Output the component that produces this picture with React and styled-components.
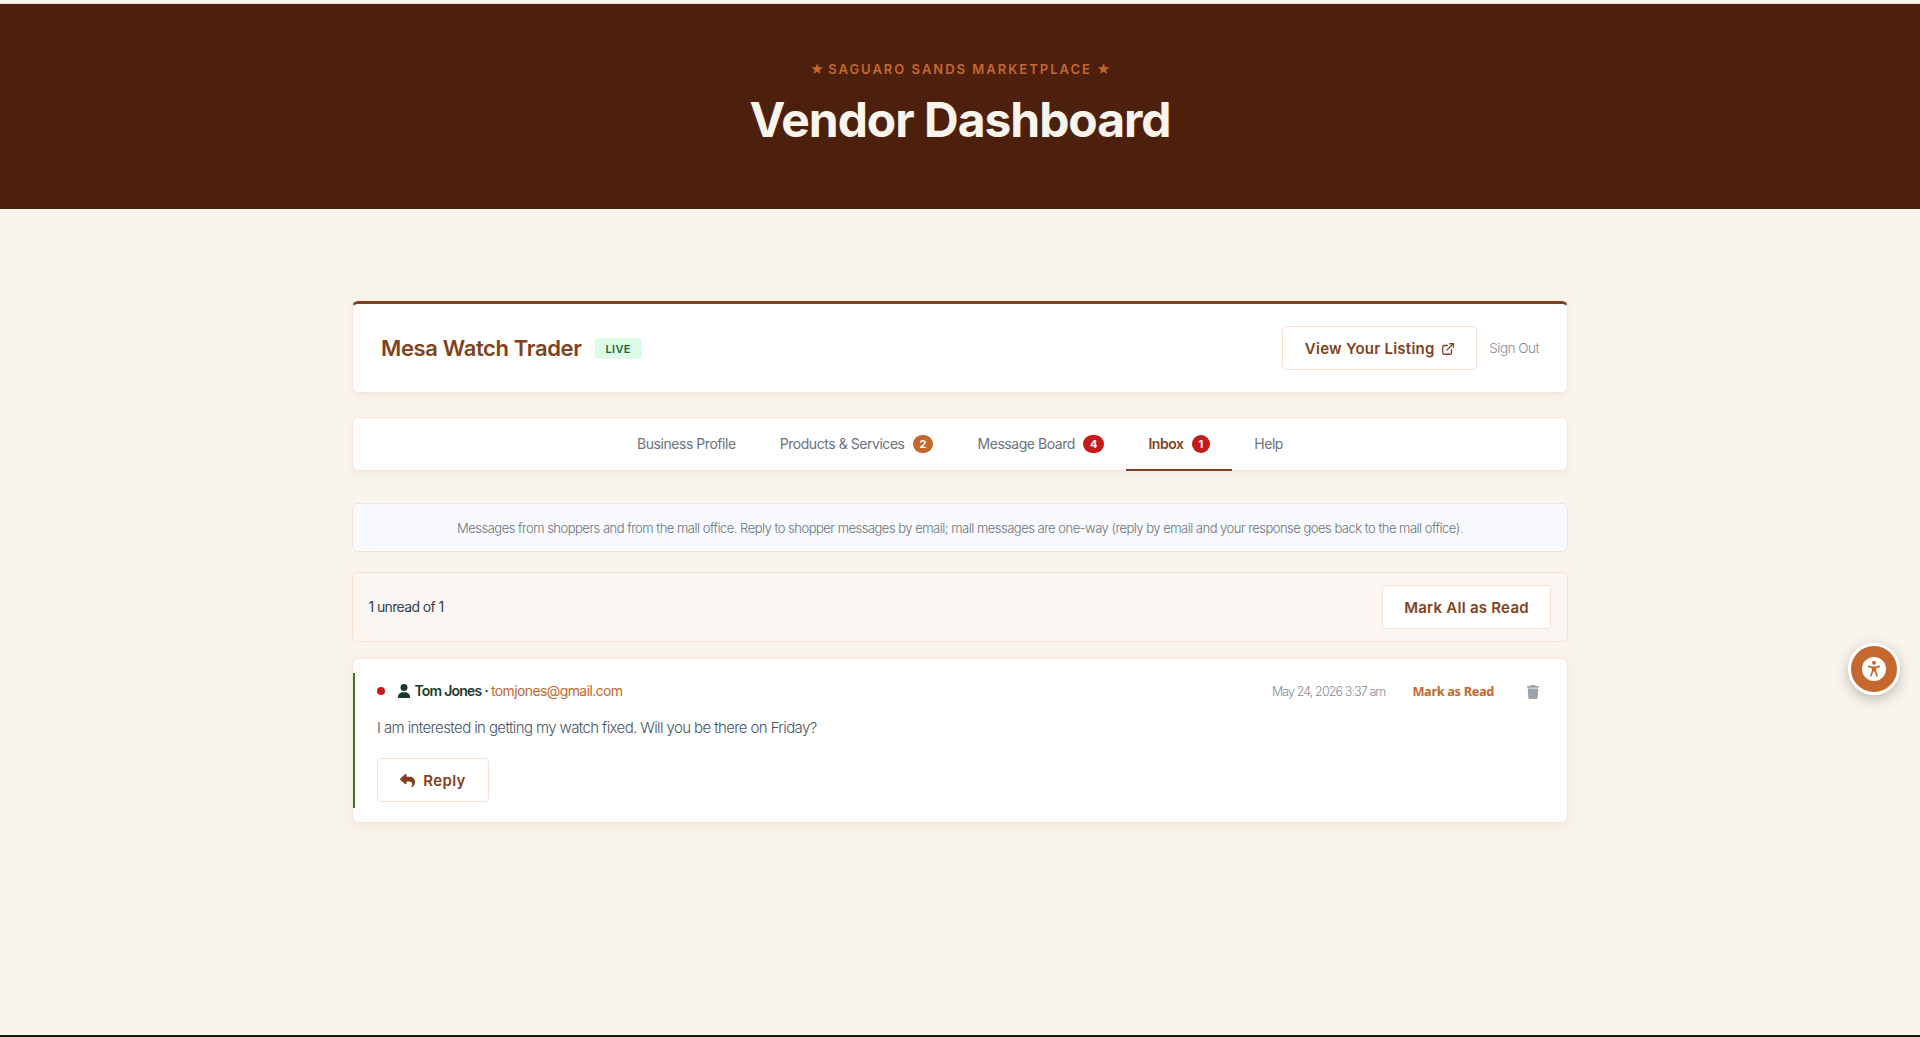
import React from "react";
import styled, { createGlobalStyle } from "styled-components";
import { ExternalLink } from "lucide-react";
import { FaUser, FaReply, FaTrash } from "react-icons/fa6";

const GlobalStyle = createGlobalStyle`
  *, *::before, *::after { box-sizing: border-box; }
  html, body { margin: 0; height: 100%; overflow: hidden; }
  body {
    background: #faf5ec;
    color: #475569;
    font-family: Inter, "Liberation Sans", sans-serif;
  }
  button { font-family: inherit; cursor: pointer; }
  a { text-decoration: none; }
`;

const Page = styled.div`
  height: 1037px;
  display: flex;
  flex-direction: column;
  overflow: hidden;
`;

const TopStrip = styled.div`
  flex: none;
  height: 4px;
  background: #faf5ec;
  border-bottom: 1px solid #eadfd5;
`;

const Hero = styled.header`
  flex: none;
  height: 205px;
  padding-top: 56px;
  display: flex;
  flex-direction: column;
  align-items: center;
  background: #4d200d;
`;

const Eyebrow = styled.div`
  display: flex;
  align-items: center;
  gap: 5px;
  color: #c4682e;
  font-size: 13px;
  font-weight: 600;
  line-height: 19px;
  letter-spacing: 1.99px;
`;

const Star = styled.span`
  width: 13px;
  font-family: "DejaVu Sans", sans-serif;
  font-size: 15px;
  font-weight: 400;
  letter-spacing: 0;
`;

const HeroTitle = styled.h1`
  margin: 12px 0 0;
  color: #faf5ec;
  font-size: 48px;
  font-weight: 700;
  line-height: 58px;
  letter-spacing: -1.05px;
`;

const Main = styled.main`
  flex: 1;
  width: 1216px;
  margin: 0 auto;
  padding-top: 92px;
`;

const Card = styled.section`
  background: #fff;
  border: 1px solid #f7e4d9;
  border-radius: 6px;
  box-shadow: 0 3px 10px rgba(77, 32, 13, 0.05);
`;

const VendorCard = styled(Card)`
  height: 92px;
  padding: 0 28px;
  display: flex;
  align-items: center;
  border-top: 3px solid #80421c;
`;

const VendorName = styled.h2`
  margin: 0;
  color: #80421c;
  font-size: 22px;
  font-weight: 600;
  line-height: 28px;
  letter-spacing: -0.36px;
`;

const StatusPill = styled.span`
  display: grid;
  place-items: center;
  width: 47px;
  height: 21px;
  margin: 1px 0 0 13px;
  border-radius: 4px;
  background: #dcfce7;
  color: #1c6637;
  font-size: 11px;
  font-weight: 600;
  letter-spacing: 0.3px;
`;

const VendorActions = styled.div`
  display: flex;
  align-items: center;
  gap: 12px;
  margin-left: auto;
`;

const OutlineButton = styled.button`
  display: flex;
  align-items: center;
  justify-content: center;
  gap: ${(p) => p.$gap || 6}px;
  width: ${(p) => p.$width}px;
  height: 44px;
  padding: 1px 0 0;
  border: 1px solid #f7e1d4;
  border-radius: 4px;
  background: #fff;
  color: #80421c;
  font-size: 15px;
  font-weight: 600;
  letter-spacing: ${(p) => p.$tracking || 0.25}px;
  white-space: nowrap;
`;

const SignOut = styled.a`
  color: #858b99;
  font-size: 13.5px;
  font-weight: 300;
  letter-spacing: -0.5px;
`;

const Tabs = styled(Card).attrs({ as: "nav" })`
  display: flex;
  justify-content: center;
  height: 54px;
  margin-top: 24px;
`;

const Tab = styled.a`
  display: flex;
  align-items: center;
  gap: 8px;
  height: 53px;
  padding: 0 22px;
  border-bottom: 2px solid ${(p) => (p.$active ? "#80421c" : "transparent")};
  color: ${(p) => (p.$active ? "#80421c" : "#6b7280")};
  font-size: 14px;
  font-weight: ${(p) => (p.$active ? 600 : 400)};
  letter-spacing: -0.45px;
`;

const CountBadge = styled.span`
  display: grid;
  place-items: center;
  height: 18px;
  padding: 0 7px;
  border-radius: 9px;
  background: ${(p) => (p.$urgent ? "#c41a1a" : "#c4682e")};
  color: #fff;
  font-size: 11px;
  font-weight: 700;
  letter-spacing: 0;
`;

const InfoBanner = styled.p`
  display: flex;
  align-items: center;
  justify-content: center;
  height: 49px;
  margin: 32px 0 0;
  border: 1px solid #f2e2dc;
  border-radius: 6px;
  background: #f9fafe;
  color: #6b7280;
  font-size: 13px;
  font-weight: 300;
  letter-spacing: -0.505px;
  white-space: nowrap;
`;

const InboxToolbar = styled.div`
  display: flex;
  align-items: center;
  justify-content: space-between;
  height: 70px;
  margin-top: 20px;
  padding: 0 16px 0 15.5px;
  border: 1px solid #f5dfd0;
  border-radius: 6px;
  background: #fbf6f2;
`;

const UnreadCount = styled.span`
  padding-bottom: 1px;
  color: #334155;
  font-size: 14px;
  font-weight: 400;
  letter-spacing: -0.62px;
`;

const MessageCard = styled(Card)`
  height: 165px;
  margin-top: 16px;
  padding: 14px 0;
  box-shadow: 0 3px 12px rgba(160, 80, 40, 0.09);
`;

const Message = styled.article`
  height: 135px;
  padding: 5px 27px 0 22px;
  border-left: 2px solid #2e7d32;
`;

const MessageHeader = styled.div`
  display: flex;
  align-items: center;
  height: 25px;
`;

const UnreadDot = styled.span`
  width: 8px;
  height: 8px;
  border-radius: 50%;
  background: #c41a1a;
`;

const Sender = styled.span`
  display: flex;
  align-items: center;
  margin-left: 12px;
  color: #1b3a2a;
  font-size: 14px;
  font-weight: 600;
  white-space: pre;

  svg { margin-right: 3.5px; }
`;

const SenderName = styled.span`
  letter-spacing: -0.78px;
`;

const Email = styled.a`
  margin-left: 3px;
  color: #c4682e;
  font-size: 14px;
  letter-spacing: -0.6px;
`;

const Timestamp = styled.time`
  margin-left: auto;
  padding-top: 1px;
  color: #858b99;
  font-size: 12.5px;
  font-weight: 300;
  letter-spacing: -0.9px;
`;

const MarkRead = styled.button`
  margin-left: 27px;
  padding: 0;
  border: 0;
  background: none;
  color: #c4682e;

  && { font-family: "Noto Sans", "Open Sans", sans-serif; }
  font-size: 12.8px;
  font-weight: 700;
  letter-spacing: -0.36px;
`;

const DeleteButton = styled.button`
  display: flex;
  margin-left: 32px;
  padding: 2px 0 0;
  border: 0;
  background: none;
  color: #9ca3af;
`;

const MessageBody = styled.p`
  margin: 13px 0 18px;
  color: #475569;
  font-size: 15px;
  font-weight: 300;
  line-height: 24px;
  letter-spacing: -0.61px;
`;

const AccessibilityButton = styled.button`
  position: fixed;
  top: 643px;
  right: 20px;
  display: grid;
  place-items: center;
  width: 52px;
  height: 52px;
  padding: 0;
  border: 3px solid #fff;
  border-radius: 50%;
  background: #c4682e;
  box-shadow: 0 4px 14px rgba(0, 0, 0, 0.25);
`;

const Footer = styled.footer`
  flex: none;
  height: 2px;
  border-top: 1px solid #2a150f;
  background: #150708;
`;

const tabs = [
  { label: "Business Profile" },
  { label: "Products & Services", count: 2 },
  { label: "Message Board", count: 4, urgent: true },
  { label: "Inbox", count: 1, urgent: true, active: true },
  { label: "Help" },
];

function AccessibilityIcon() {
  return (
    <svg width="24" height="24" viewBox="0 0 24 24" aria-hidden="true">
      <circle cx="12" cy="12" r="12" fill="#fff" />
      <circle cx="12" cy="5.8" r="2" fill="#c4682e" />
      <path
        d="M6.7 9.4 10 10.4h4l3.3-1M10.6 10.8v3.4L9 18.6M13.4 10.8v3.4L15 18.6"
        fill="none"
        stroke="#c4682e"
        strokeWidth="1.7"
        strokeLinecap="round"
        strokeLinejoin="round"
      />
      <path d="M10 10.2h4v4.4h-4z" fill="#c4682e" />
    </svg>
  );
}

export default function App() {
  return (
    <>
      <GlobalStyle />
      <Page>
        <TopStrip />
        <Hero>
          <Eyebrow>
            <Star>★</Star>
            <span>SAGUARO SANDS MARKETPLACE</span>
            <Star>★</Star>
          </Eyebrow>
          <HeroTitle>Vendor Dashboard</HeroTitle>
        </Hero>
        <Main>
          <VendorCard>
            <VendorName>Mesa Watch Trader</VendorName>
            <StatusPill>LIVE</StatusPill>
            <VendorActions>
              <OutlineButton $width={195}>
                View Your Listing
                <ExternalLink size={14} strokeWidth={2.2} />
              </OutlineButton>
              <SignOut>Sign Out</SignOut>
            </VendorActions>
          </VendorCard>

          <Tabs>
            {tabs.map((tab) => (
              <Tab key={tab.label} $active={tab.active}>
                {tab.label}
                {tab.count && <CountBadge $urgent={tab.urgent}>{tab.count}</CountBadge>}
              </Tab>
            ))}
          </Tabs>

          <InfoBanner>
            Messages from shoppers and from the mall office. Reply to shopper messages by email; mall
            messages are one-way (reply by email and your response goes back to the mall office).
          </InfoBanner>

          <InboxToolbar>
            <UnreadCount>1 unread of 1</UnreadCount>
            <OutlineButton $width={169}>Mark All as Read</OutlineButton>
          </InboxToolbar>

          <MessageCard>
            <Message>
              <MessageHeader>
                <UnreadDot />
                <Sender>
                  <FaUser size={14} />
                  <SenderName>Tom Jones ·</SenderName>
                </Sender>
                <Email>tomjones@gmail.com</Email>
                <Timestamp>May 24, 2026 3:37 am</Timestamp>
                <MarkRead>Mark as Read</MarkRead>
                <DeleteButton aria-label="Delete">
                  <FaTrash size={14} />
                </DeleteButton>
              </MessageHeader>
              <MessageBody>
                I am interested in getting my watch fixed. Will you be there on Friday?
              </MessageBody>
              <OutlineButton $width={112} $gap={8} $tracking={0.4}>
                <FaReply size={15} />
                Reply
              </OutlineButton>
            </Message>
          </MessageCard>
        </Main>
        <Footer />
      </Page>
      <AccessibilityButton aria-label="Accessibility options">
        <AccessibilityIcon />
      </AccessibilityButton>
    </>
  );
}
